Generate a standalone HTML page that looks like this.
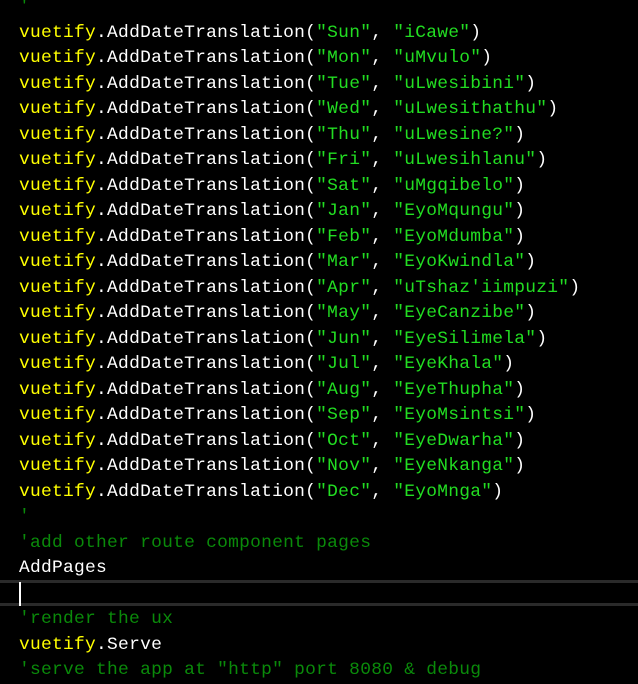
<!DOCTYPE html>
<html><head><meta charset="utf-8"><style>
html,body{margin:0;padding:0;background:#000;width:638px;height:663px;overflow:hidden}
.c{position:absolute;left:19px;top:-5px;font-family:"Liberation Mono",monospace;font-size:17.9px;letter-spacing:0.27px;line-height:25.5px;color:#fff;white-space:pre}
.y{color:#ffff00}.s{color:#22dd22}.g{color:#0a8a0a}
.hl{position:absolute;left:0;top:580px;width:638px;height:20px;border-top:3px solid #2a2a2a;border-bottom:3px solid #2a2a2a}
.cur{position:absolute;left:19px;top:582px;width:2px;height:24px;background:#fff}
</style></head><body>
<div class="hl"></div><div class="cur"></div>
<div class="c"><span class="g">'</span>
<span class="y">vuetify</span>.AddDateTranslation(<span class="s">"Sun"</span>, <span class="s">"iCawe"</span>)
<span class="y">vuetify</span>.AddDateTranslation(<span class="s">"Mon"</span>, <span class="s">"uMvulo"</span>)
<span class="y">vuetify</span>.AddDateTranslation(<span class="s">"Tue"</span>, <span class="s">"uLwesibini"</span>)
<span class="y">vuetify</span>.AddDateTranslation(<span class="s">"Wed"</span>, <span class="s">"uLwesithathu"</span>)
<span class="y">vuetify</span>.AddDateTranslation(<span class="s">"Thu"</span>, <span class="s">"uLwesine?"</span>)
<span class="y">vuetify</span>.AddDateTranslation(<span class="s">"Fri"</span>, <span class="s">"uLwesihlanu"</span>)
<span class="y">vuetify</span>.AddDateTranslation(<span class="s">"Sat"</span>, <span class="s">"uMgqibelo"</span>)
<span class="y">vuetify</span>.AddDateTranslation(<span class="s">"Jan"</span>, <span class="s">"EyoMqungu"</span>)
<span class="y">vuetify</span>.AddDateTranslation(<span class="s">"Feb"</span>, <span class="s">"EyoMdumba"</span>)
<span class="y">vuetify</span>.AddDateTranslation(<span class="s">"Mar"</span>, <span class="s">"EyoKwindla"</span>)
<span class="y">vuetify</span>.AddDateTranslation(<span class="s">"Apr"</span>, <span class="s">"uTshaz'iimpuzi"</span>)
<span class="y">vuetify</span>.AddDateTranslation(<span class="s">"May"</span>, <span class="s">"EyeCanzibe"</span>)
<span class="y">vuetify</span>.AddDateTranslation(<span class="s">"Jun"</span>, <span class="s">"EyeSilimela"</span>)
<span class="y">vuetify</span>.AddDateTranslation(<span class="s">"Jul"</span>, <span class="s">"EyeKhala"</span>)
<span class="y">vuetify</span>.AddDateTranslation(<span class="s">"Aug"</span>, <span class="s">"EyeThupha"</span>)
<span class="y">vuetify</span>.AddDateTranslation(<span class="s">"Sep"</span>, <span class="s">"EyoMsintsi"</span>)
<span class="y">vuetify</span>.AddDateTranslation(<span class="s">"Oct"</span>, <span class="s">"EyeDwarha"</span>)
<span class="y">vuetify</span>.AddDateTranslation(<span class="s">"Nov"</span>, <span class="s">"EyeNkanga"</span>)
<span class="y">vuetify</span>.AddDateTranslation(<span class="s">"Dec"</span>, <span class="s">"EyoMnga"</span>)
<span class="g">'</span>
<span class="g">'add other route component pages</span>
AddPages

<span class="g">'render the ux</span>
<span class="y">vuetify</span>.Serve
<span class="g">'serve the app at "http" port 8080 & debug</span></div>
</body></html>
